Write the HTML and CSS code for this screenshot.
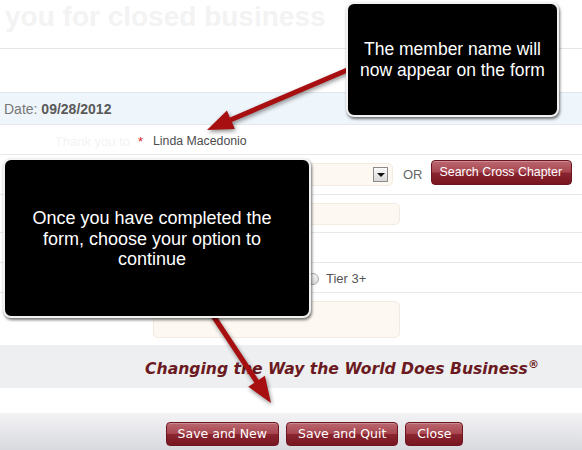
FILE: index.html
```html
<!DOCTYPE html>
<html>
	<head>
		<meta charset="utf-8">
		<title>Thank you for closed business</title>
		<link rel="stylesheet" href="styles.css">
	</head>
	<body>
		<div class="page">
			<div class="title">you for closed business</div>
			<div class="row blank"></div>
			<div class="row date">Date:&nbsp;<b>09/28/2012</b></div>

			<div class="row field name">
				<span class="label">Thank you to</span>
				<span class="req">*</span>
				<span class="value">Linda Macedonio</span>
			</div>

			<div class="row field pick">
				<span class="label"></span>
				<span class="req"></span>
				<span class="value">
					<span class="select"><span class="drop"></span></span>
					<span class="or">OR</span>
					<a class="btn btn-search">Search Cross Chapter</a>
				</span>
			</div>

			<div class="row field amount">
				<span class="label"></span>
				<span class="req"></span>
				<span class="value"><span class="input"></span></span>
			</div>

			<div class="row field empty"></div>

			<div class="row field tier">
				<span class="label"></span>
				<span class="req"></span>
				<span class="value">
					<span class="opt"><i class="radio"></i></span>
					<span class="opt"><i class="radio"></i></span>
					<span class="opt"><i class="radio"></i>Tier 3+</span>
				</span>
			</div>

			<div class="row field notes">
				<span class="label"></span>
				<span class="req"></span>
				<span class="value"><span class="textarea"></span></span>
			</div>

			<div class="slogan">Changing the Way the World Does Business<sup>&reg;</sup></div>
			<div class="spacer"></div>

			<div class="footer">
				<a class="btn">Save and New</a>
				<a class="btn">Save and Quit</a>
				<a class="btn">Close</a>
			</div>

			<!-- pointer arrows, drawn under the callouts -->
			<svg class="arrows" width="582" height="450" viewBox="0 0 582 450">
				<line x1="352" y1="68" x2="228" y2="121" />
				<polygon points="207,130 226.9,110.5 234.9,128.9" />
				<line x1="212" y1="314" x2="259" y2="385" />
				<polygon points="271,403 248.3,386.8 264.9,375.8" />
			</svg>

			<div class="callout callout-top">The member name will<br>now appear on the form</div>
			<div class="callout callout-left">Once you have completed the<br>form, choose your option to<br>continue</div>
		</div>
	</body>
</html>
```

FILE: styles.css
```css
* {
	box-sizing: border-box;
}

body {
	margin: 0;
	font-family: "Liberation Sans", Arial, sans-serif;
	font-size: 13px;
	color: #555;
	background: #fff;
}

.page {
	position: relative;
	width: 582px;
	height: 450px;
	overflow: hidden;
}

.title {
	height: 49px;
	padding: 1px 0 0 5px;
	border-bottom: 1px solid #e6e6e6;
	font-size: 28px;
	font-weight: bold;
	line-height: 32px;
	color: #f3f3f3;
	white-space: nowrap;
}

.row {
	display: flex;
	align-items: center;
	border-bottom: 1px solid #e8e8e8;
}

.blank {
	height: 44px;
	border-bottom-color: #dfe7ee;
}

.date {
	height: 32px;
	padding-left: 4px;
	background: #eef5fb;
	border-bottom-color: #e3e9ee;
	font-size: 14px;
	color: #777;
}

.date b {
	color: #5a5a5a;
}

.field .label {
	width: 135px;
	padding-right: 5px;
	text-align: right;
	color: #f3f3f3;
}

.field .req {
	width: 18px;
	padding-left: 3px;
	color: #d22;
}

.field .value {
	display: flex;
	align-items: center;
}

.name {
	height: 30px;
	padding-top: 3px;
}

.name .value {
	font-size: 12.3px;
	color: #4d4d4d;
}

.pick {
	height: 40px;
}

.amount {
	height: 38px;
}

.empty {
	height: 30px;
}

.tier {
	height: 30px;
	padding-top: 2px;
}

.notes {
	height: 52px;
	align-items: flex-start;
	padding-top: 8px;
	border-bottom: none;
}

.select,
.input,
.textarea {
	display: block;
	background: #fdf9f2;
	border: 1px solid #f1ebe1;
	border-radius: 5px;
}

.select {
	position: relative;
	width: 240px;
	height: 23px;
}

.select .drop {
	position: absolute;
	right: 4px;
	top: 3px;
	width: 15px;
	height: 15px;
	border: 1px solid #8a8a8a;
	background: linear-gradient(#fafafa, #d8d8d8);
}

.select .drop:after {
	content: "";
	position: absolute;
	left: 3px;
	top: 5px;
	border-left: 4px solid transparent;
	border-right: 4px solid transparent;
	border-top: 4px solid #111;
}

.or {
	margin: 0 8px 0 10px;
	color: #666;
}

.input {
	width: 247px;
	height: 22px;
	margin-top: 1px;
}

.textarea {
	width: 247px;
	height: 37px;
}

.opt {
	display: flex;
	align-items: center;
	width: 78px;
}

.radio {
	display: inline-block;
	width: 12px;
	height: 12px;
	margin: 0 7px 0 -2px;
	border: 1px solid #a9a9a9;
	border-radius: 50%;
	background: linear-gradient(#f4f4f4, #dcdcdc);
}

.btn {
	display: inline-block;
	height: 24px;
	padding: 0 11px;
	border: 1px solid #6d1520;
	border-radius: 4px;
	background: linear-gradient(#bb6770 0%, #a7464f 48%, #8a2530 52%, #781620 100%);
	box-shadow: inset 0 1px 0 rgba(255, 255, 255, 0.25);
	color: #fff;
	font-family: "DejaVu Sans", Verdana, sans-serif;
	font-size: 12.5px;
	line-height: 22px;
	white-space: nowrap;
}

.btn-search {
	height: 25px;
	margin-bottom: 4px;
	padding: 0 9px 0 8px;
	font-family: "Liberation Sans", Arial, sans-serif;
	font-size: 12.4px;
	line-height: 23px;
}

.slogan {
	height: 43px;
	padding: 5px 0 0 102px;
	background: #eeeff1;
	text-align: center;
	font-family: "DejaVu Sans", Verdana, sans-serif;
	font-size: 15.6px;
	font-weight: bold;
	font-style: italic;
	line-height: 38px;
	color: #6a1a20;
}

.slogan sup {
	font-size: 11px;
	line-height: 0;
}

.spacer {
	height: 25px;
}

.footer {
	display: flex;
	justify-content: center;
	gap: 7px;
	height: 37px;
	padding: 9px 0 0 47px;
	background: linear-gradient(#f3f3f5, #d9dadf);
}

/* arrows and callouts sit on top of the form */
.arrows {
	position: absolute;
	left: 0;
	top: 0;
	filter: drop-shadow(1px 2px 2px rgba(0, 0, 0, 0.45));
}

.arrows line {
	stroke: #a80f10;
	stroke-width: 5;
}

.arrows polygon {
	fill: #a80f10;
}

.callout {
	position: absolute;
	display: flex;
	align-items: center;
	justify-content: center;
	background: #000;
	border: 2px solid #f2f2f2;
	border-radius: 8px;
	box-shadow: 1px 2px 3px rgba(0, 0, 0, 0.55);
	color: #fff;
	text-align: center;
}

.callout-top {
	left: 346px;
	top: 2px;
	width: 213px;
	height: 115px;
	font-size: 17.5px;
	line-height: 21px;
}

.callout-left {
	left: 3px;
	top: 158px;
	width: 308px;
	height: 160px;
	padding: 2px 10px 0 0;
	font-size: 18px;
	line-height: 20.5px;
}
```
